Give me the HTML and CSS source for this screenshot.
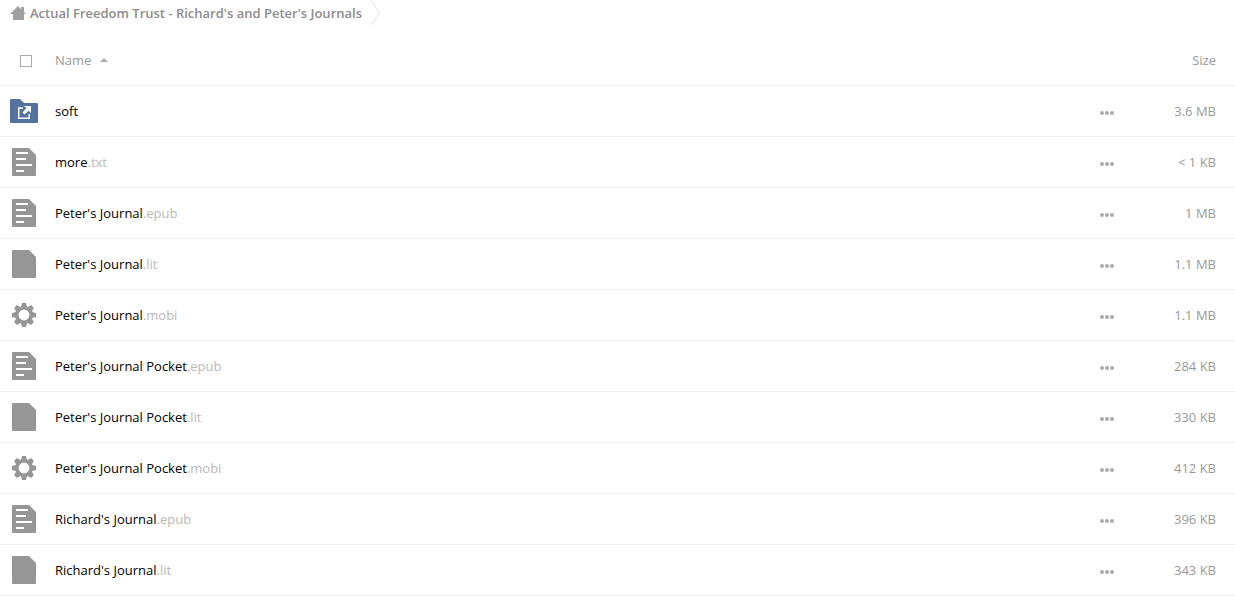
FILE: index.html
```html
<!DOCTYPE html>
<html lang="en">
<head>
    <meta charset="UTF-8">
    <meta name="viewport" content="width=device-width, initial-scale=1.0">
    <title>Actual Freedom Trust - Richard's and Peter's Journals</title>
    <link rel="stylesheet" href="styles.css">
</head>
<body>
    <!-- Icons -->
    <svg class="sprite" aria-hidden="true">
        <symbol id="text" viewBox="0 0 32 32">
            <path fill="#969696" d="M5 2h16l7 7v20q0 1-1 1H5q-1 0-1-1V3q0-1 1-1z"/>
            <path fill="#fff" d="M8 6h12v2H8zM8 12h10v2H8zM8 18h16v2H8zM8 24h8v2H8z"/>
        </symbol>
        <symbol id="file" viewBox="0 0 32 32">
            <path fill="#969696" d="M5 2h16l7 7v20q0 1-1 1H5q-1 0-1-1V3q0-1 1-1z"/>
        </symbol>
        <symbol id="gear" viewBox="0 0 32 32">
            <circle cx="16" cy="16" r="7.200" fill="none" stroke="#969696" stroke-width="3.600"/>
            <g fill="#969696">
                <path d="M14 4h4l1 4h-6zM14 28h4l1-4h-6zM4 14v4l4 1v-6zM28 14v4l-4 1v-6z"/>
                <path transform="rotate(45 16 16)" d="M14 4h4l1 4h-6zM14 28h4l1-4h-6zM4 14v4l4 1v-6zM28 14v4l-4 1v-6z"/>
            </g>
        </symbol>
        <symbol id="folder" viewBox="0 0 32 32">
            <path fill="#54739c" d="M3 4h9l4 4h13q1 0 1 1v18q0 1-1 1H3q-1 0-1-1V5q0-1 1-1z"/>
            <path fill="none" stroke="#fff" stroke-width="1.500" d="M15 13h-4.300v10.300h10.500V19"/>
            <path fill="#fff" d="M16 11h7v7l-2.300-2.300-4.200 3.800-2-2 3.800-4.200z"/>
        </symbol>
        <symbol id="more" viewBox="0 0 14 4">
            <circle cx="2" cy="2" r="2"/><circle cx="7" cy="2" r="2"/><circle cx="12" cy="2" r="2"/>
        </symbol>
    </svg>

    <nav class="breadcrumb">
        <a href="#">
            <svg class="home" viewBox="0 0 16 14" aria-hidden="true"><path d="M8 0l3 3V1h3v5l2 2h-2v6H3V8H0z"/></svg>
            <span>Actual Freedom Trust - Richard's and Peter's Journals</span>
        </a>
        <svg class="separator" viewBox="0 0 9 26" aria-hidden="true"><path d="M1 1l7 12-7 12"/></svg>
    </nav>

    <table class="files">
        <thead>
            <tr>
                <th class="icon"><input type="checkbox" aria-label="Select all"></th>
                <th class="name"><button class="sort">Name <span class="arrow"></span></button></th>
                <th class="actions"></th>
                <th class="size"><button class="sort">Size</button></th>
            </tr>
        </thead>
        <tbody id="fileList"></tbody>
    </table>

    <script>
        const files = [
            { icon: 'folder', name: 'soft', ext: '', size: '3.6 MB' },
            { icon: 'text', name: 'more', ext: '.txt', size: '< 1 KB' },
            { icon: 'text', name: "Peter's Journal", ext: '.epub', size: '1 MB' },
            { icon: 'file', name: "Peter's Journal", ext: '.lit', size: '1.1 MB' },
            { icon: 'gear', name: "Peter's Journal", ext: '.mobi', size: '1.1 MB' },
            { icon: 'text', name: "Peter's Journal Pocket", ext: '.epub', size: '284 KB' },
            { icon: 'file', name: "Peter's Journal Pocket", ext: '.lit', size: '330 KB' },
            { icon: 'gear', name: "Peter's Journal Pocket", ext: '.mobi', size: '412 KB' },
            { icon: 'text', name: "Richard's Journal", ext: '.epub', size: '396 KB' },
            { icon: 'file', name: "Richard's Journal", ext: '.lit', size: '343 KB' }
        ];

        document.getElementById('fileList').innerHTML = files.map(file => `
            <tr>
                <td class="icon"><svg class="thumb" aria-hidden="true"><use href="#${file.icon}"/></svg></td>
                <td class="name"><a href="#">${file.name}<span class="ext">${file.ext}</span></a></td>
                <td class="actions"><button class="menu" aria-label="Actions"><svg aria-hidden="true"><use href="#more"/></svg></button></td>
                <td class="size">${file.size.replace('<', '&lt;')}</td>
            </tr>`).join('');
    </script>
</body>
</html>
```

FILE: styles.css
```css
body {
    margin: 0;
    background-color: #fff;
    color: #000;
    font-family: "Open Sans", sans-serif;
    font-size: 13px;
    line-height: 20px;
}

a {
    color: inherit;
    text-decoration: none;
}

button {
    padding: 0;
    border: none;
    background: none;
    color: inherit;
    font: inherit;
    cursor: pointer;
}

.sprite {
    display: none;
}

.breadcrumb {
    display: flex;
    gap: 9px;
    height: 35px;
    padding-left: 10px;
    color: #8c8c8c;
    font-weight: 600;
}

.breadcrumb a {
    display: flex;
    align-items: center;
    gap: 4px;
    height: 26px;
}

.home {
    width: 16px;
    height: 14px;
    fill: #a0a0a0;
}

.separator {
    width: 9px;
    height: 26px;
    fill: none;
    stroke: #e4e4e4;
}

.files {
    width: 100%;
    border-collapse: separate;
    border-spacing: 0;
    table-layout: fixed;
}

.files th,
.files td {
    height: 50px;
    padding: 0;
    border-bottom: 1px solid #eee;
    font-weight: normal;
    text-align: left;
}

.files th {
    color: #999;
}

.files .icon {
    width: 55px;
}

.files .actions {
    width: 60px;
}

.files .size {
    width: 76px;
    padding-right: 19px;
    color: #999;
    text-align: right;
}

input[type="checkbox"] {
    display: block;
    appearance: none;
    width: 12px;
    height: 12px;
    margin: 2px 0 0 20px;
    border: 1px solid #aaa;
}

.sort {
    display: inline-flex;
    align-items: center;
    gap: 9px;
}

.arrow {
    border: 4px solid transparent;
    border-top: none;
    border-bottom-color: #aaa;
}

.thumb {
    display: block;
    width: 32px;
    height: 32px;
    margin-left: 8px;
}

.ext {
    color: #b9b9b9;
}

.menu {
    display: block;
    padding: 10px 20px 6px;
}

.menu svg {
    display: block;
    width: 14px;
    height: 4px;
    fill: #aaa;
}
```
